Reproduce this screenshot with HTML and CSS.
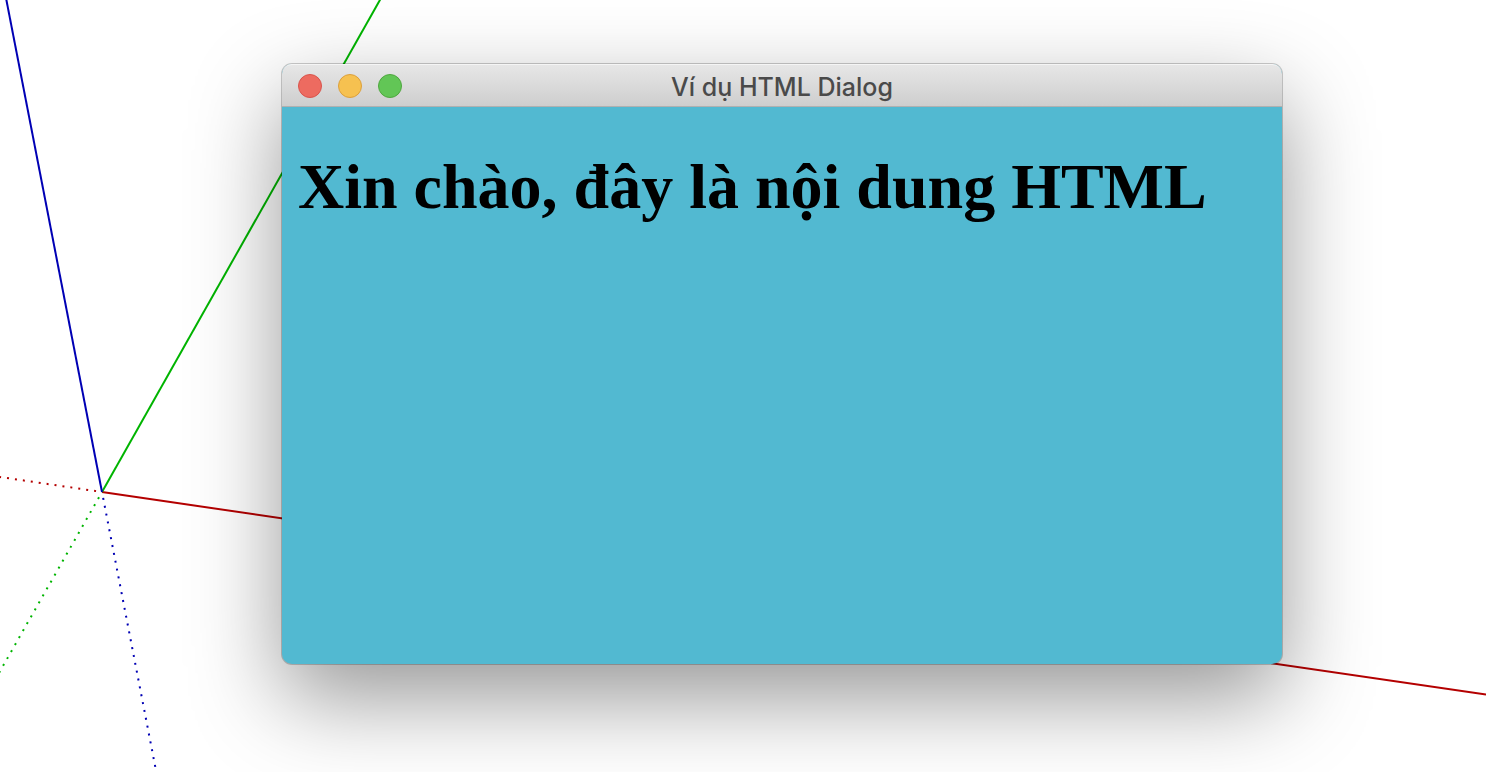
FILE: index.html
```
<!DOCTYPE html>
<html lang="vi">
<head>
<meta charset="utf-8">
<title>Ví dụ HTML Dialog</title>
<link rel="stylesheet" href="styles.css">
</head>
<body>
<main class="viewport">
  <svg class="axes" viewBox="0 0 1486 772" preserveAspectRatio="xMinYMin slice" aria-hidden="true">
    <g class="axis-solid">
      <path class="red" d="M102 492L1486 694.500"/>
      <path class="green" d="M102 492L380.500 -1"/>
      <path class="blue" d="M102 492L6 -2"/>
    </g>
    <g class="axis-dotted">
      <path class="red" d="M102 492L0 477"/>
      <path class="green" d="M102 492L-1 673"/>
      <path class="blue" d="M102 492L155.500 768"/>
    </g>
  </svg>
  <section class="window" role="dialog" aria-labelledby="window-title">
    <header class="titlebar">
      <div class="controls">
        <button class="control close" type="button" aria-label="Đóng"></button>
        <button class="control minimize" type="button" aria-label="Thu nhỏ"></button>
        <button class="control zoom" type="button" aria-label="Phóng to"></button>
      </div>
      <span class="title" id="window-title">Ví dụ HTML Dialog</span>
    </header>
    <div class="content">
      <h1 class="greeting">Xin chào, đây là nội dung HTML</h1>
    </div>
  </section>
</main>
</body>
</html>
```

FILE: styles.css
```
body {
  margin: 0;
  background: #fff;
}

.viewport {
  position: relative;
  box-sizing: border-box;
  display: flex;
  min-height: 100vh;
  padding: 64px 204px 108px 282px;
  overflow: hidden;
}

/* Drawing axes behind the dialog */
.axes {
  position: absolute;
  inset: 0;
  width: 100%;
  height: 100%;
}

.axis-solid,
.axis-dotted {
  fill: none;
  stroke-width: 2;
}

.axis-dotted {
  stroke-dasharray: 2 6;
  stroke-dashoffset: -6;
}

.red { stroke: #b40000; }
.green { stroke: #00b400; }
.blue { stroke: #0000b4; }

.window {
  position: relative;
  display: flex;
  flex: 1;
  flex-direction: column;
  border-radius: 10px;
  background: #52b9d1;
  box-shadow: 0 0 0 1px rgba(0, 0, 0, 0.2), 0 34px 90px rgba(0, 0, 0, 0.41);
}

.titlebar {
  display: grid;
  grid-template-columns: 1fr auto 1fr;
  align-items: center;
  height: 40px;
  padding: 2px 16px 0;
  border-bottom: 1px solid #b0b0b0;
  border-radius: 10px 10px 0 0;
  background: linear-gradient(#e7e7e7, #cecece);
  box-shadow: inset 0 2px 0 -1px #f5f5f5;
}

.controls {
  display: flex;
  gap: 16px;
}

.control {
  box-sizing: border-box;
  width: 24px;
  height: 24px;
  padding: 0;
  border: 1px solid;
  border-radius: 50%;
}

.close { border-color: #d9544c; background: #ed6b60; }
.minimize { border-color: #dca03c; background: #f6c150; }
.zoom { border-color: #4fa73f; background: #62c656; }

.title {
  padding-top: 2px;
  color: #4a4a4a;
  font: 500 25px/30px Inter, Roboto, sans-serif;
}

.content {
  flex: 1;
  padding: 43px 16px;
}

.greeting {
  margin: 0;
  color: #000;
  font: bold 64px/74px "Liberation Serif", "Times New Roman", serif;
}
```
